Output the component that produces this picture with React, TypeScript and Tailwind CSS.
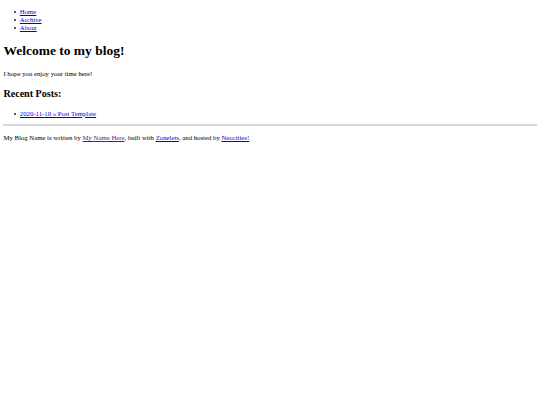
function Item({ children }: { children: React.ReactNode }) {
  return (
    <li className="flex items-center">
      <span className="-ml-[6px] mr-[3.7px] h-[2.2px] w-[2.2px] shrink-0 rounded-full bg-[#222]" />
      {children}
    </li>
  );
}

export default function App() {
  return (
    <div className="flex min-h-[405px] flex-col bg-white px-[3.4px] text-[6.75px] leading-[8.2px] text-black [font-family:'Liberation_Serif',serif]">
      <ul className="mt-[7.6px] pl-[16.6px]">
        <Item><a href="#" className="text-[#0000ee] underline">Home</a></Item>
        <Item><a href="#" className="text-[#0000ee] underline">Archive</a></Item>
        <Item><a href="#" className="text-[#0000ee] underline">About</a></Item>
      </ul>
      <h1 className="mt-[10.3px] text-[13.5px] font-bold leading-[16.4px]">Welcome to my blog!</h1>
      <p className="mt-[10.7px]">I hope you enjoy your time here!</p>
      <h2 className="mt-[9.75px] text-[10.1px] font-bold leading-[12.3px]">Recent Posts:</h2>
      <ul className="mt-[9.75px] pl-[16.6px]">
        <Item><a href="#" className="text-[#0000ee] underline">2020-11-10 » Post Template</a></Item>
      </ul>
      <hr className="mt-[6.2px] h-[2px] border-0 bg-[#d8d8d8]" />
      <p className="mt-[8.4px]">
        My Blog Name is written by <a href="#" className="text-[#551a8b] underline">My Name Here</a>, built with{' '}
        <a href="#" className="text-[#0000ee] underline">Zonelets</a>, and hosted by{' '}
        <a href="#" className="text-[#0000ee] underline">Neocities!</a>
      </p>
    </div>
  );
}
